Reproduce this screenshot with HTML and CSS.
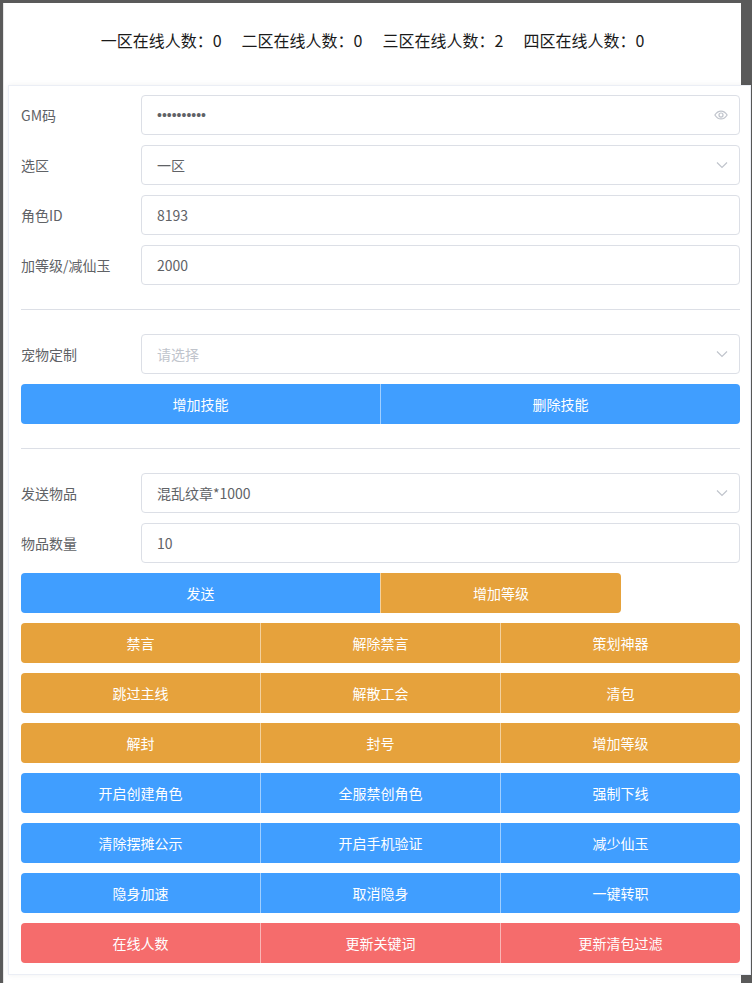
FILE: index.html
```html
<!DOCTYPE html>
<html lang="zh">
<head>
<meta charset="utf-8">
<link rel="stylesheet" href="styles.css">
</head>
<body>
<div class="page">
  <div class="header">
    <span>一区在线人数：0</span>
    <span>二区在线人数：0</span>
    <span>三区在线人数：2</span>
    <span>四区在线人数：0</span>
  </div>
  <div class="card">
    <div class="section">
      <div class="row">
        <div class="label">GM码</div>
        <div class="input"><span class="dots">••••••••••</span>
          <svg class="icon" viewBox="0 0 16 16" width="14" height="14"><path d="M1 8c1.8-3 4.2-4.5 7-4.5S13.2 5 15 8c-1.8 3-4.2 4.5-7 4.5S2.8 11 1 8z" fill="none" stroke="#c0c4cc" stroke-width="1.4"/><circle cx="8" cy="8" r="2.3" fill="none" stroke="#c0c4cc" stroke-width="1.4"/></svg>
        </div>
      </div>
      <div class="row">
        <div class="label">选区</div>
        <div class="input"><span>一区</span>
          <svg class="icon" viewBox="0 0 12 8" width="12" height="8"><path d="M1 1.5l5 5 5-5" fill="none" stroke="#c0c4cc" stroke-width="1.2"/></svg>
        </div>
      </div>
      <div class="row">
        <div class="label">角色ID</div>
        <div class="input"><span>8193</span></div>
      </div>
      <div class="row">
        <div class="label">加等级/减仙玉</div>
        <div class="input"><span>2000</span></div>
      </div>
    </div>
    <div class="divider"></div>
    <div class="section">
      <div class="row">
        <div class="label">宠物定制</div>
        <div class="input"><span class="placeholder">请选择</span>
          <svg class="icon" viewBox="0 0 12 8" width="12" height="8"><path d="M1 1.5l5 5 5-5" fill="none" stroke="#c0c4cc" stroke-width="1.2"/></svg>
        </div>
      </div>
      <div class="group">
        <div class="btn blue">增加技能</div>
        <div class="btn blue">删除技能</div>
      </div>
    </div>
    <div class="divider"></div>
    <div class="section">
      <div class="row">
        <div class="label">发送物品</div>
        <div class="input"><span>混乱纹章*1000</span>
          <svg class="icon" viewBox="0 0 12 8" width="12" height="8"><path d="M1 1.5l5 5 5-5" fill="none" stroke="#c0c4cc" stroke-width="1.2"/></svg>
        </div>
      </div>
      <div class="row">
        <div class="label">物品数量</div>
        <div class="input"><span>10</span></div>
      </div>
      <div class="group">
        <div class="btn blue half">发送</div>
        <div class="btn orange third">增加等级</div>
      </div>
      <div class="group">
        <div class="btn orange">禁言</div>
        <div class="btn orange">解除禁言</div>
        <div class="btn orange">策划神器</div>
      </div>
      <div class="group">
        <div class="btn orange">跳过主线</div>
        <div class="btn orange">解散工会</div>
        <div class="btn orange">清包</div>
      </div>
      <div class="group">
        <div class="btn orange">解封</div>
        <div class="btn orange">封号</div>
        <div class="btn orange">增加等级</div>
      </div>
      <div class="group">
        <div class="btn blue">开启创建角色</div>
        <div class="btn blue">全服禁创角色</div>
        <div class="btn blue">强制下线</div>
      </div>
      <div class="group">
        <div class="btn blue">清除摆摊公示</div>
        <div class="btn blue">开启手机验证</div>
        <div class="btn blue">减少仙玉</div>
      </div>
      <div class="group">
        <div class="btn blue">隐身加速</div>
        <div class="btn blue">取消隐身</div>
        <div class="btn blue">一键转职</div>
      </div>
      <div class="group">
        <div class="btn red">在线人数</div>
        <div class="btn red">更新关键词</div>
        <div class="btn red">更新清包过滤</div>
      </div>
    </div>
  </div>
</div>
</body>
</html>
```
FILE: styles.css
```css
html, body {
  margin: 0;
  padding: 0;
}
body {
  background: #5a5a5a;
  font-family: "Noto Sans CJK SC", "Noto Sans", "Liberation Sans", sans-serif;
  padding: 3px 0 0 3px;
  height: 980px;
  overflow: hidden;
}
.page {
  width: 738px;
  height: 980px;
  background: #fff;
  border-left: 1px solid #e6e6e6;
  box-sizing: border-box;
}
.header {
  height: 82px;
  box-sizing: border-box;
  padding-bottom: 8px;
  display: flex;
  justify-content: center;
  align-items: center;
  gap: 20px;
  font-size: 16px;
  color: #1a1a1a;
}
.card {
  margin-left: 4px;
  width: 743px;
  box-sizing: border-box;
  background: #fff;
  border: 1px solid #ebeef5;
  box-shadow: 0 0 6px rgba(0, 0, 0, 0.06);
  padding: 9px 10px 11px 12px;
}
.section {
  display: flex;
  flex-direction: column;
  gap: 10px;
}
.divider {
  height: 1px;
  background: #dcdfe6;
  margin: 24px 0;
}
.row {
  display: flex;
  height: 40px;
  align-items: center;
}
.label {
  width: 120px;
  font-size: 14px;
  color: #606266;
}
.input {
  flex: 1;
  height: 40px;
  box-sizing: border-box;
  border: 1px solid #dcdfe6;
  border-radius: 4px;
  padding: 0 15px;
  display: flex;
  align-items: center;
  justify-content: space-between;
  font-size: 14px;
  color: #606266;
}
.placeholder {
  color: #c0c4cc;
}
.dots {
  font-family: "Liberation Sans", sans-serif;
  font-size: 14px;
  color: #606266;
}
.icon {
  display: block;
  margin-right: -4px;
}
.group {
  display: flex;
  height: 40px;
  width: 719px;
  border-radius: 4px;
  overflow: hidden;
}
.btn {
  flex: 1;
  display: flex;
  align-items: center;
  justify-content: center;
  color: #fff;
  font-size: 14px;
  border-left: 1px solid rgba(255, 255, 255, 0.5);
}
.btn:first-child {
  border-left: none;
}
.btn.half {
  flex: 0 0 359px;
}
.btn.third {
  flex: 0 0 240px;
  border-radius: 0 4px 4px 0;
}
.blue {
  background: #409eff;
}
.orange {
  background: #e6a23c;
}
.red {
  background: #f56c6c;
}
```
